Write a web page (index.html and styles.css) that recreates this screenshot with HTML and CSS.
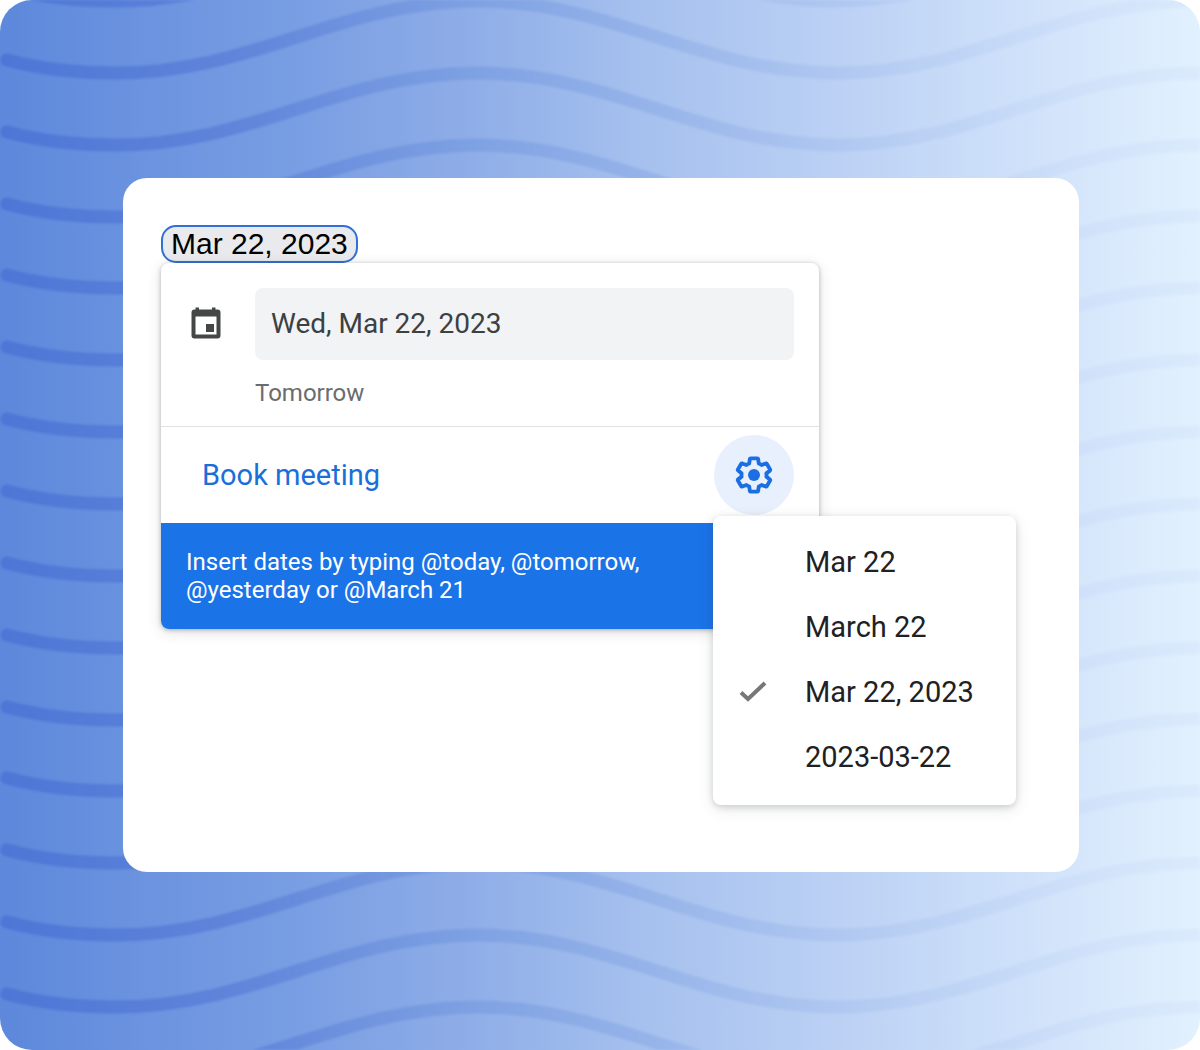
FILE: index.html
```html
<!DOCTYPE html>
<html lang="en">
<head>
<meta charset="utf-8">
<meta name="viewport" content="width=device-width, initial-scale=1">
<title>Date chip</title>
<link rel="stylesheet" href="styles.css">
</head>
<body>
<main class="stage">
  <svg class="waves" viewBox="0 0 1200 1050" preserveAspectRatio="none" aria-hidden="true">
    <defs>
      <linearGradient id="ink" gradientUnits="userSpaceOnUse" x1="0" y1="0" x2="1200" y2="0">
        <stop offset="0" stop-color="#4d76d6"/>
        <stop offset="0.2" stop-color="#6085da"/>
        <stop offset="0.4" stop-color="#7fa2e3"/>
        <stop offset="0.7" stop-color="#b0c8f1"/>
        <stop offset="0.9" stop-color="#cfe1fa"/>
        <stop offset="1" stop-color="#dbebfd"/>
      </linearGradient>
      <path id="wave" d="M7 -12C40 -3 75 1 117 1C253 1 341 -71 477 -71C613 -71 701 1 837 1C973 1 1061 -71 1197 -71L1210 -71"/>
    </defs>
    <g fill="none" stroke="url(#ink)" stroke-width="13" stroke-linecap="round">
      <use href="#wave"/>
      <use href="#wave" y="72"/>
      <use href="#wave" y="144"/>
      <use href="#wave" y="216"/>
      <use href="#wave" y="287"/>
      <use href="#wave" y="359"/>
      <use href="#wave" y="431"/>
      <use href="#wave" y="503"/>
      <use href="#wave" y="575"/>
      <use href="#wave" y="647"/>
      <use href="#wave" y="719"/>
      <use href="#wave" y="790"/>
      <use href="#wave" y="862"/>
      <use href="#wave" y="934"/>
      <use href="#wave" y="1006"/>
      <use href="#wave" y="1078"/>
    </g>
  </svg>

  <section class="card">
    <button class="chip" type="button">Mar 22, 2023</button>

    <div class="panel">
      <div class="date">
        <svg class="calendar" viewBox="0 0 30 32" aria-hidden="true">
          <path fill="#444746" fill-rule="evenodd" d="M4.500 0.500h3.500v2h13v-2h3.500v2h2a3 3 0 0 1 3 3v23a3 3 0 0 1-3 3h-23a3 3 0 0 1-3-3V5.500a3 3 0 0 1 3-3h1zM4.500 9.500v18h21v-18zM15 17h8v8h-8z"/>
        </svg>
        <div class="entry">
          <input class="field" type="text" id="date" value="Wed, Mar 22, 2023" aria-label="Date">
          <label class="hint" for="date">Tomorrow</label>
        </div>
      </div>
      <div class="actions">
        <a class="book" href="#">Book meeting</a>
        <button class="gear" type="button" aria-label="Date format">
          <svg viewBox="0 0 24 24" aria-hidden="true">
            <path fill="none" stroke="#1b6fe3" stroke-width="2.300" stroke-linejoin="round" d="M19.430 12.980c.04-.32.07-.64.07-.98s-.03-.66-.07-.98l2.110-1.650c.19-.15.24-.42.12-.64l-2-3.460c-.09-.16-.26-.25-.44-.25-.06 0-.12.010-.17.030l-2.490 1c-.52-.4-1.080-.73-1.690-.98l-.38-2.650C14.460 2.180 14.250 2 14 2h-4c-.25 0-.46.18-.49.42l-.38 2.650c-.61.25-1.170.59-1.690.98l-2.490-1c-.06-.02-.12-.03-.18-.03-.17 0-.34.09-.43.25l-2 3.460c-.13.22-.07.49.12.64l2.110 1.650c-.04.32-.07.65-.07.98s.03.66.07.98l-2.110 1.650c-.19.15-.24.42-.12.64l2 3.460c.09.16.26.25.44.25.06 0 .12-.01.17-.03l2.490-1c.52.4 1.080.73 1.690.98l.38 2.650c.03.24.24.42.49.42h4c.25 0 .46-.18.49-.42l.38-2.650c.61-.25 1.170-.59 1.690-.98l2.490 1c.06.02.12.03.18.03.17 0 .34-.09.43-.25l2-3.460c.12-.22.07-.49-.12-.64z"/>
            <circle cx="12" cy="12" r="3.600" fill="#1b6fe3"/>
          </svg>
        </button>
      </div>
      <p class="tip">Insert dates by typing @today, @tomorrow, @yesterday or @March 21</p>
    </div>

    <div class="menu" role="menu">
      <button class="item" type="button" role="menuitemradio" aria-checked="false">Mar 22</button>
      <button class="item" type="button" role="menuitemradio" aria-checked="false">March 22</button>
      <button class="item" type="button" role="menuitemradio" aria-checked="true">
        <svg class="check" viewBox="0 0 28 22" aria-hidden="true"><path fill="none" stroke="#777" stroke-width="4" d="M2 11.500L9 18L26 2"/></svg>
        Mar 22, 2023
      </button>
      <button class="item" type="button" role="menuitemradio" aria-checked="false">2023-03-22</button>
    </div>
  </section>
</main>
</body>
</html>
```

FILE: styles.css
```css
* {
  box-sizing: border-box;
}

body {
  margin: 0;
  background: #fff;
  font-family: Roboto, "Liberation Sans", sans-serif;
}

button,
input {
  margin: 0;
  border: 0;
  font: inherit;
}

.stage {
  position: relative;
  min-height: 100vh;
  padding: 178px 121px 178px 123px;
  overflow: hidden;
  border-radius: 32px;
  background: linear-gradient(90deg, #5d88db 0%, #6b93df 12%, #799ee3 25%, #90aee8 40%, #a5c0ee 53%, #bad0f4 69%, #cfe1fa 85%, #e2f1fe 100%);
}

.waves {
  position: absolute;
  inset: 0;
  width: 100%;
  height: 100%;
  filter: blur(1px);
}

.card {
  position: relative;
  padding: 47px 63px 67px 38px;
  border-radius: 24px;
  background: #fff;
}

.chip {
  display: block;
  height: 38px;
  padding: 0 8px;
  border: 2px solid #2f6fd6;
  border-radius: 15px;
  background: #e8eaed;
  color: #000;
  font-family: "Liberation Sans", Arial, sans-serif;
  font-size: 30px;
  line-height: 34px;
}

.panel {
  max-width: 658px;
  border-radius: 8px;
  background: #fff;
  box-shadow: 0 1px 4px rgba(60, 64, 67, 0.35), 0 3px 14px rgba(60, 64, 67, 0.16);
}

.date {
  display: flex;
  gap: 34px;
  padding: 25px 25px 16px 30px;
  border-bottom: 1px solid #dfe1e4;
}

.calendar {
  flex: none;
  width: 30px;
  height: 32px;
  margin-top: 19px;
}

.entry {
  flex: 1;
  min-width: 0;
}

.field {
  display: block;
  width: 100%;
  height: 72px;
  padding: 0 16px 2px;
  border-radius: 8px;
  background: #f1f3f4;
  color: #3c4043;
  font-size: 28px;
}

.hint {
  display: block;
  margin-top: 16px;
  color: #6b6c6e;
  font-size: 24px;
  line-height: 34px;
}

.actions {
  display: flex;
  align-items: center;
  justify-content: space-between;
  height: 96px;
  padding: 0 25px 0 41px;
}

.book {
  color: #1b6fd8;
  font-size: 29px;
  text-decoration: none;
}

.gear {
  display: grid;
  place-items: center;
  width: 80px;
  height: 80px;
  padding: 0;
  border-radius: 50%;
  background: #e8f0fe;
}

.gear svg {
  width: 40px;
  height: 40px;
}

.tip {
  margin: 0;
  padding: 25px 160px 25px 25px;
  border-radius: 0 0 8px 8px;
  background: #1b73e8;
  color: #fff;
  font-size: 24px;
  line-height: 28px;
}

.menu {
  position: relative;
  width: 303px;
  margin: -113px 0 0 auto;
  padding: 13px 0 16px;
  border-radius: 8px;
  background: #fff;
  box-shadow: 0 2px 6px rgba(60, 64, 67, 0.2), 0 4px 16px rgba(60, 64, 67, 0.12);
}

.item {
  display: flex;
  align-items: center;
  width: 100%;
  height: 65px;
  padding: 0 0 0 92px;
  background: none;
  color: #202124;
  font-size: 29px;
  text-align: left;
}

.check {
  flex: none;
  width: 28px;
  height: 22px;
  margin: 0 38px 0 -66px;
}
```
